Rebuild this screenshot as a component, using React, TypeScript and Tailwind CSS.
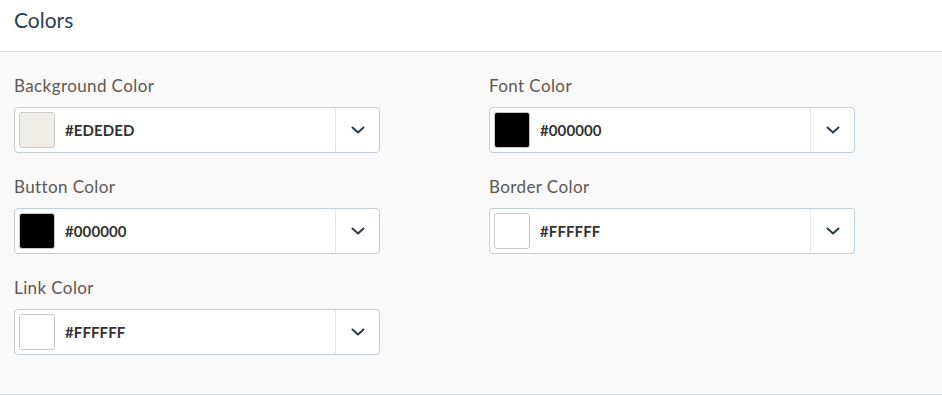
import React from "react";

const font = { fontFamily: "Lato, 'Open Sans', sans-serif" };

function Chevron() {
  return (
    <svg width="14" height="8" viewBox="0 0 14 8" fill="none">
      <path d="M1.5 1.5L7 6.5L12.5 1.5" stroke="#2b3a4a" strokeWidth="2" strokeLinecap="round" strokeLinejoin="round" />
    </svg>
  );
}

function ColorField({ label, value, swatch }: { label: string; value: string; swatch: string }) {
  return (
    <div className="flex flex-col">
      <div className="h-[20px] leading-[20px] text-[17px] tracking-[0.4px] text-[#5e5753] mb-[11px]">{label}</div>
      <div className="flex h-[46px] w-[366px] items-stretch rounded-[4px] border border-[#c4ccd4] bg-white">
        <div className="flex flex-1 items-center pl-[4px]">
          <div className="h-[36px] w-[36px] rounded-[3px] border border-[#c8c8c8]" style={{ backgroundColor: swatch }} />
          <span className="ml-[10px] text-[15px] font-bold text-[#333333] tracking-[0.1px]">{value}</span>
        </div>
        <div className="flex w-[44px] items-center justify-center border-l border-[#e6e6e6]">
          <Chevron />
        </div>
      </div>
    </div>
  );
}

export default function App() {
  return (
    <div className="w-[942px] h-[395px] bg-white" style={font}>
      <div className="h-[52px] border-b border-[#d8d8d8] bg-white px-[14px] pt-[6px]">
        <div className="text-[21px] leading-[28px] text-[#2c3e50]">Colors</div>
      </div>
      <div className="h-[343px] border-b border-[#d3dae0] bg-[#f9f9f9] px-[14px] pt-[24px]">
        <div className="grid grid-cols-[366px_366px] gap-x-[109px] gap-y-[24px]">
          <ColorField label="Background Color" value="#EDEDED" swatch="#efede8" />
          <ColorField label="Font Color" value="#000000" swatch="#000000" />
          <ColorField label="Button Color" value="#000000" swatch="#000000" />
          <ColorField label="Border Color" value="#FFFFFF" swatch="#ffffff" />
          <ColorField label="Link Color" value="#FFFFFF" swatch="#ffffff" />
        </div>
      </div>
    </div>
  );
}
